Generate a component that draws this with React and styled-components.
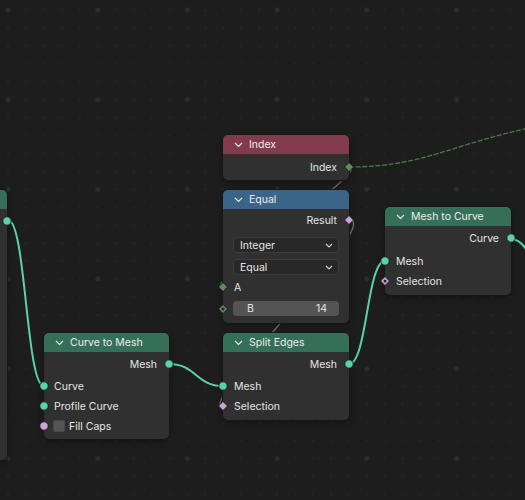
import React from 'react';
import styled, { createGlobalStyle } from 'styled-components';

const GlobalStyle = createGlobalStyle`
  html, body { margin: 0; padding: 0; background: #1d1d1d; }
  body { font-family: Inter, "DejaVu Sans", sans-serif; }
`;

const Canvas = styled.div`
  position: relative;
  width: 525px;
  height: 500px;
  overflow: hidden;
  background-color: #1d1d1d;
  background-image:
    radial-gradient(circle, #2d2d2d 2.2px, transparent 2.9px),
    radial-gradient(circle, #242424 1px, transparent 1.7px);
  background-size: 89.7px 89.7px, 17.94px 17.94px;
  background-position: -36.85px -34.85px, -0.97px 1.03px;
`;

const Wires = styled.svg`
  position: absolute;
  left: 0;
  top: 0;
  z-index: 0;
`;

const NodeBox = styled.div`
  position: absolute;
  z-index: 1;
  left: ${p => p.$x}px;
  top: ${p => p.$y}px;
  width: ${p => p.$w}px;
  ${p => (p.$h ? `height: ${p.$h}px;` : '')}
  padding-bottom: ${p => p.$pb ?? 4}px;
  background: #303030;
  border-radius: 5px;
  box-shadow: 0 0 0 1px #171717, 0 2px 6px rgba(0, 0, 0, 0.45);
  color: #e4e4e4;
  font-size: 10.5px;
`;

const Header = styled.div`
  height: 19px;
  display: flex;
  align-items: center;
  gap: 6px;
  padding-left: 11px;
  margin-bottom: ${p => p.$gap ?? 2}px;
  background: ${p => p.$color};
  border-radius: 5px 5px 0 0;
  color: #ececec;
  font-size: 10.5px;
`;

const Row = styled.div`
  position: relative;
  height: 20px;
  display: flex;
  align-items: center;
  gap: 4px;
  justify-content: ${p => (p.$out ? 'flex-end' : 'flex-start')};
  padding: 0 12px 0 ${p => p.$pl ?? 11}px;
  margin-top: ${p => p.$mt ?? 0}px;
`;

const FieldRow = styled.div`
  position: relative;
  height: 15px;
  margin-top: 4px;
  display: flex;
`;

const SocketSlot = styled.span`
  position: absolute;
  top: 50%;
  ${p => (p.$out ? 'right' : 'left')}: -5px;
  width: 10px;
  height: 10px;
  margin-top: -5px;
  display: flex;
`;

const Dropdown = styled.div`
  height: 16px;
  margin: ${p => p.$mt}px 10px 0;
  padding: 0 5px 0 6px;
  display: flex;
  align-items: center;
  justify-content: space-between;
  background: #282828;
  border: 1px solid #3b3b3b;
  border-radius: 4px;
  box-sizing: border-box;
`;

const ValueField = styled.div`
  flex: 1;
  height: 15px;
  margin: 0 10px;
  padding: 0 12px 0 14px;
  display: flex;
  align-items: center;
  justify-content: space-between;
  background: #545454;
  border-radius: 4px;
`;

const Checkbox = styled.span`
  width: 12px;
  height: 12px;
  border-radius: 3px;
  background: #545454;
  box-shadow: inset 0 0 0 1px #4a4a4a;
`;

const GEO = '#5ad2a8';
const INT = '#5d8f58';
const BOOL = '#cca6d8';

const Chevron = () => (
  <svg width="9" height="6" viewBox="0 0 9 6">
    <polyline points="1,1 4.5,4.5 8,1" fill="none" stroke="#e6e6e6" strokeWidth="1.2" />
  </svg>
);

const SmallChevron = () => (
  <svg width="8" height="5" viewBox="0 0 8 5">
    <polyline points="1,1 4,4 7,1" fill="none" stroke="#d0d0d0" strokeWidth="1.1" />
  </svg>
);

function Socket({ kind, color, out }) {
  return (
    <SocketSlot $out={out}>
      <svg width="10" height="10" viewBox="0 0 10 10">
        {kind === 'circle' && <circle cx="5" cy="5" r="4.2" fill={color} stroke="#1a1a1a" strokeWidth="0.9" />}
        {kind !== 'circle' && (
          <polygon points="5,0.5 9.5,5 5,9.5 0.5,5" fill={color} stroke="#1a1a1a" strokeWidth="0.9" />
        )}
        {kind === 'field' && <circle cx="5" cy="5" r="1.5" fill="#222" />}
      </svg>
    </SocketSlot>
  );
}

function Node({ x, y, w = 126, title, color, pb, gap, children, h }) {
  return (
    <NodeBox $x={x} $y={y} $w={w} $pb={pb} $h={h}>
      <Header $color={color} $gap={gap}>
        <Chevron />
        <span>{title}</span>
      </Header>
      {children}
    </NodeBox>
  );
}

function Port({ label, kind = 'circle', color = GEO, out, mt, pl, children }) {
  return (
    <Row $out={out} $mt={mt} $pl={pl}>
      {children}
      {label && <span>{label}</span>}
      {kind && <Socket kind={kind} color={color} out={out} />}
    </Row>
  );
}

export default function App() {
  return (
    <>
      <GlobalStyle />
      <Canvas>
        <Wires width="525" height="500">
          <path d="M349,167 C430,167 455,140 560,122" fill="none" stroke="#4a7844" strokeWidth="1.3" strokeDasharray="5 1.6" />
          <path d="M349,167 C375,167 195,288 223,288" fill="none" stroke="#56705a" strokeWidth="1.4" />
          <path d="M349,220 C385,220 195,406 223,406" fill="none" stroke="#6f6b74" strokeWidth="1.4" />
          <path d="M8,220 C26,220 26,386 44,386" fill="none" stroke={GEO} strokeWidth="2" />
          <path d="M169,364 C196,364 196,386 223,386" fill="none" stroke={GEO} strokeWidth="2" />
          <path d="M349,364 C367,364 367,261 385,261" fill="none" stroke={GEO} strokeWidth="2" />
          <path d="M511,239 C526,239 533,262 550,300" fill="none" stroke={GEO} strokeWidth="2" />
        </Wires>

        <NodeBox $x={-120} $y={190} $w={127} $h={270} $pb={0}>
          <Header $color="#356f5a" />
          <Port out kind="circle" mt={2} />
        </NodeBox>

        <Node x={223} y={135} title="Index" color="#833a4d" gap={3} pb={3}>
          <Port out label="Index" kind="diamond" color={INT} />
        </Node>

        <Node x={223} y={190} title="Equal" color="#3a6589" gap={1} pb={7}>
          <Port out label="Result" kind="diamond" color={BOOL} />
          <Dropdown $mt={7}>
            <span>Integer</span>
            <SmallChevron />
          </Dropdown>
          <Dropdown $mt={6}>
            <span>Equal</span>
            <SmallChevron />
          </Dropdown>
          <Port label="A" kind="diamond" color={INT} mt={2} />
          <FieldRow>
            <Socket kind="field" color={INT} />
            <ValueField>
              <span>B</span>
              <span>14</span>
            </ValueField>
          </FieldRow>
        </Node>

        <Node x={385} y={207} title="Mesh to Curve" color="#356f5a" gap={2} pb={4}>
          <Port out label="Curve" />
          <Port label="Mesh" mt={3} />
          <Port label="Selection" kind="field" color={BOOL} />
        </Node>

        <Node x={44} y={333} w={125} title="Curve to Mesh" color="#356f5a" gap={2} pb={3}>
          <Port out label="Mesh" />
          <Port label="Curve" mt={2} pl={10} />
          <Port label="Profile Curve" pl={10} />
          <Port label="Fill Caps" color={BOOL} pl={9}>
            <Checkbox />
          </Port>
        </Node>

        <Node x={223} y={333} title="Split Edges" color="#356f5a" gap={2} pb={4}>
          <Port out label="Mesh" />
          <Port label="Mesh" mt={2} />
          <Port label="Selection" kind="diamond" color={BOOL} />
        </Node>
      </Canvas>
    </>
  );
}
